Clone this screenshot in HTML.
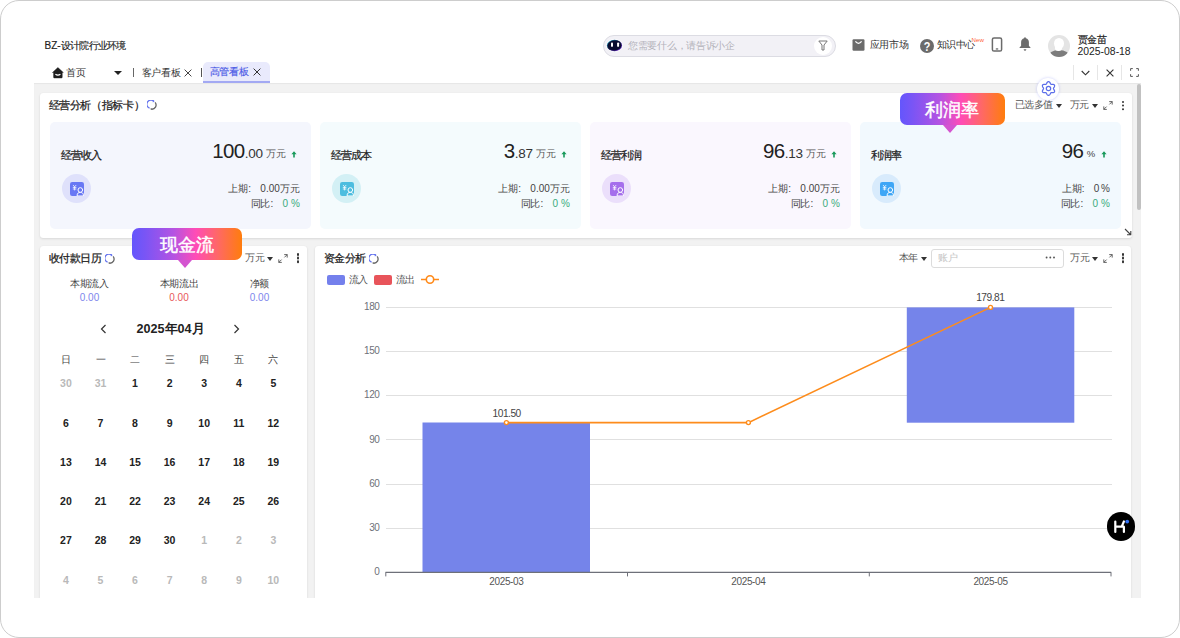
<!DOCTYPE html>
<html><head><meta charset="utf-8">
<style>
*{box-sizing:border-box;margin:0;padding:0}
html,body{width:1180px;height:638px;overflow:hidden;background:#fff}
body{position:relative;font-family:"Liberation Sans",sans-serif;color:#333}
.a{position:absolute;white-space:nowrap}
.t{line-height:1}
.frame{position:absolute;left:0;top:0;width:1180px;height:638px;border:1.6px solid #cdcdcd;border-radius:19px}
.grey{position:absolute;left:34px;top:83px;width:1107px;height:515px;background:#f2f2f2;box-shadow:inset 0 1px 1px rgba(0,0,0,.05)}
.card{position:absolute;background:#fff;border-radius:3px;box-shadow:0 1px 2.5px rgba(0,0,0,.1),0 0 1px rgba(0,0,0,.06)}
.kpi{position:absolute;top:122px;width:261px;height:107px;border-radius:5px}
.kic{position:absolute;left:12px;top:52px;width:29px;height:29px;border-radius:50%}
.kic svg{position:absolute;left:7.5px;top:8px}
.bubble{position:absolute;height:32.4px;border-radius:7px;background:linear-gradient(90deg,#6456fc 0%,#7a55f5 12%,#b553e2 38%,#ff4cb6 58%,#ff6866 78%,#ff7d0c 100%);color:#fff;text-align:center}
.bubble span{position:absolute;left:0;right:0;font-size:18px;line-height:1;letter-spacing:0.3px;-webkit-text-stroke:0.45px #fff}
.bubble:after{content:"";position:absolute;left:50%;bottom:-8px;margin-left:-9px;border-left:7px solid transparent;border-right:7px solid transparent;border-top:8.5px solid #d454d0}
.ctl{position:absolute;font-size:9.8px;color:#555;line-height:1;letter-spacing:-0.5px}
.caret{display:inline-block;width:0;height:0;border-left:3.5px solid transparent;border-right:3.5px solid transparent;border-top:4px solid #333;vertical-align:0.5px;margin-left:3px}
.cal{position:absolute;font-size:10.5px;font-weight:bold;color:#222;width:34px;text-align:center}
.cal.g{color:#b9b9b9}
.wd{position:absolute;font-size:9.5px;color:#444;width:34px;text-align:center}
.yl{position:absolute;font-size:10px;color:#6e7079;text-align:right;width:30px;letter-spacing:-0.4px}
.grid{position:absolute;left:385.5px;width:726px;height:1px;background:#e0e0e0}
.xl{position:absolute;font-size:10px;color:#555;width:60px;text-align:center;letter-spacing:-0.35px}
.val{position:absolute;font-size:10.2px;color:#444;width:60px;text-align:center;letter-spacing:-0.5px}
.kn{position:absolute;font-size:11px;letter-spacing:-0.85px;color:#222;-webkit-text-stroke:0.25px #222;line-height:1}
.kv{position:absolute;color:#222;line-height:1;text-align:right}
.kv .b{font-size:20.5px;letter-spacing:-0.6px}
.kv .s{font-size:13.5px;color:#333;letter-spacing:-0.2px}
.kv .u{font-size:10px;color:#555;margin-left:3.4px;letter-spacing:-0.5px;vertical-align:1px}
.up{position:absolute}
.kp{position:absolute;font-size:10px;letter-spacing:-0.3px;color:#444;line-height:1;text-align:right}
.kp em{font-style:normal;color:#3aab7d}
.kp .c{margin-left:0.5px}
.kp .v{font-size:10px;margin-left:9.5px;letter-spacing:0}
.ref{position:absolute}
.dots{position:absolute;width:2.3px;height:2.3px;background:#333;border-radius:50%;box-shadow:0 3.6px 0 #333,0 7.2px 0 #333}
</style></head><body>
<div class="frame"></div>

<!-- header -->
<div id="title" class="a t" style="left:44.5px;top:40.5px;font-size:10px;color:#222;-webkit-text-stroke:0.15px #222">BZ-<span style="letter-spacing:-0.7px">设计院行业环境</span></div>

<div class="a" style="left:603px;top:35px;width:233px;height:21.5px;border:1px solid #dcdce3;border-radius:11px;background:#f2f1f6"></div>
<svg class="a" style="left:606px;top:39px" width="17" height="13" viewBox="0 0 17 13"><defs><linearGradient id="rg" x1="0" y1="0" x2="1" y2="1"><stop offset="0" stop-color="#33d0e8"/><stop offset=".45" stop-color="#0b1440"/><stop offset="1" stop-color="#8a3af0"/></linearGradient></defs><ellipse cx="8.5" cy="6.5" rx="8.5" ry="6.5" fill="#fbfbfe"/><ellipse cx="8.5" cy="6.5" rx="7.6" ry="5.7" fill="url(#rg)"/><ellipse cx="8.5" cy="6.5" rx="6.8" ry="4.9" fill="#080c2e"/><rect x="5" y="3.4" width="2" height="4.4" rx=".9" fill="#fff"/><rect x="11.1" y="3.4" width="2" height="4.4" rx=".9" fill="#fff"/></svg>
<div id="sph" class="a t" style="left:628px;top:40.5px;font-size:10px;letter-spacing:-0.3px;color:#b2b2ba">您需要什么，请告诉小企</div>
<div class="a" style="left:814px;top:36.5px;width:18px;height:18px;border-radius:50%;background:#fff"></div>
<svg class="a" style="left:818px;top:39.5px" width="10" height="11" viewBox="0 0 10 11"><path d="M.8 1h8.4L6 5v5H4V5z" fill="none" stroke="#777" stroke-width="1" stroke-linejoin="round"/></svg>

<!-- app market -->
<svg class="a" style="left:851.5px;top:39px" width="13" height="12" viewBox="0 0 13 12"><rect x=".5" y=".3" width="12" height="11.4" rx="1.2" fill="#6b6b6b"/><path d="M3.4 2.4q3.1 3.8 6.2 0" fill="none" stroke="#fff" stroke-width="1.3"/></svg>
<div id="app" class="a t" style="left:869.5px;top:40px;font-size:10px;letter-spacing:-0.2px;color:#333">应用市场</div>
<div class="a" style="left:920px;top:38.5px;width:14px;height:14px;border-radius:50%;background:#6b6b6b"></div>
<div class="a t" style="left:920px;top:40.6px;width:14px;text-align:center;font-size:12px;font-weight:bold;color:#fff;transform:scaleX(.9)">?</div>
<div id="know" class="a t" style="left:936.5px;top:40px;font-size:10px;letter-spacing:-0.5px;color:#333">知识中心</div>
<div class="a t" style="left:971.6px;top:36.6px;font-size:6.2px;color:#ff6438">New</div>
<svg class="a" style="left:991px;top:37px" width="12" height="15" viewBox="0 0 12 15"><rect x="1.4" y="1" width="9.2" height="13" rx="1.6" fill="none" stroke="#6b6b6b" stroke-width="1.5"/><rect x="4.8" y="11.3" width="2.4" height="1.3" fill="#6b6b6b"/></svg>
<svg class="a" style="left:1019px;top:37px" width="12" height="15" viewBox="0 0 12 15"><path d="M6 .3c.6 0 .9.4.9.9 1.9.4 3 2 3 4v3.6L11.8 11H.2L2.1 8.8V5.2c0-2 1.1-3.6 3-4 0-.5.3-.9.9-.9z" fill="#6b6b6b"/><path d="M4.6 12.2h2.8q-.3 1.5-1.4 1.5T4.6 12.2z" fill="#6b6b6b"/></svg>
<!-- avatar -->
<div class="a" style="left:1047.5px;top:34.5px;width:22px;height:22px;border-radius:50%;background:#e4e4e4;overflow:hidden">
  <div class="a" style="left:6px;top:3.5px;width:10px;height:11px;border-radius:50%;background:#fff"></div>
  <div class="a" style="left:0px;top:15px;width:22px;height:14px;border-radius:50%;background:#7c7c7c"></div>
  <div class="a" style="left:7.5px;top:12.5px;width:7px;height:3.5px;background:#fff;border-radius:0 0 3px 3px"></div>
</div>
<div id="name" class="a t" style="left:1077.5px;top:35px;font-size:10px;letter-spacing:-0.4px;color:#222;-webkit-text-stroke:0.2px #222">贾金苗</div>
<div id="date" class="a t" style="left:1077.5px;top:47px;font-size:10.4px;color:#222">2025-08-18</div>

<!-- tabs -->
<svg class="a" style="left:51.5px;top:67px" width="12" height="12" viewBox="0 0 12 12"><path d="M5.9.6L11.3 5.5H10.2V10.3Q10.2 10.9 9.6 10.9H2.2Q1.6 10.9 1.6 10.3V5.5H.5z" fill="#1e1e1e" stroke="#1e1e1e" stroke-width=".5" stroke-linejoin="round"/><path d="M3.4 7.3q2.5 1.7 5 0" fill="none" stroke="#fff" stroke-width="1.2"/></svg>
<div id="home" class="a t" style="left:66px;top:67.5px;font-size:10px;letter-spacing:-0.5px;color:#333">首页</div>
<div class="a" style="left:113.5px;top:70.5px;width:0;height:0;border-left:4px solid transparent;border-right:4px solid transparent;border-top:4.5px solid #222"></div>
<div class="a" style="left:133px;top:68px;width:1.2px;height:9px;background:#666"></div>
<div id="tab1" class="a t" style="left:141.5px;top:67.5px;font-size:10px;letter-spacing:-0.3px;color:#333">客户看板</div>
<svg class="a" style="left:184px;top:68.5px" width="8" height="8" viewBox="0 0 8 8"><path d="M.6.6l6.8 6.8M7.4.6L.6 7.4" stroke="#444" stroke-width="1"/></svg>
<div class="a" style="left:201px;top:68px;width:1.2px;height:9px;background:#555"></div>
<div class="a" style="left:203px;top:62px;width:66.5px;height:21px;border-radius:5px 5px 0 0;background:#e9eafc;border-bottom:2px solid #a3a9f3"></div>
<div id="tab2" class="a t" style="left:209.5px;top:67px;font-size:10px;letter-spacing:-0.3px;color:#4a59e6;-webkit-text-stroke:0.15px #4a59e6">高管看板</div>
<svg class="a" style="left:252.5px;top:68px" width="8" height="8" viewBox="0 0 8 8"><path d="M.6.6l6.8 6.8M7.4.6L.6 7.4" stroke="#333" stroke-width="1"/></svg>
<!-- right tab ctrls -->
<div class="a" style="left:1073px;top:65px;width:1px;height:15px;background:#e6e6e6"></div>
<div class="a" style="left:1097px;top:65px;width:1px;height:15px;background:#e6e6e6"></div>
<div class="a" style="left:1121px;top:65px;width:1px;height:15px;background:#e6e6e6"></div>
<svg class="a" style="left:1080.5px;top:69.5px" width="9" height="6" viewBox="0 0 9 6"><path d="M.7 1l3.8 3.8L8.3 1" fill="none" stroke="#333" stroke-width="1.1"/></svg>
<svg class="a" style="left:1105.5px;top:68.5px" width="8" height="8" viewBox="0 0 8 8"><path d="M.6.6l6.8 6.8M7.4.6L.6 7.4" stroke="#333" stroke-width="1.1"/></svg>
<svg class="a" style="left:1129.5px;top:68px" width="9" height="9" viewBox="0 0 9 9"><path d="M.6 2.8V.6h2.2M6.2.6h2.2v2.2M8.4 6.2v2.2H6.2M2.8 8.4H.6V6.2" fill="none" stroke="#555" stroke-width="1"/></svg>

<!-- grey dashboard -->
<div class="grey"></div>
<div class="a" style="left:1136.5px;top:84px;width:4.5px;height:126px;border-radius:2.2px;background:#c1c1c1"></div>

<!-- card 1 -->
<div class="card" style="left:40px;top:92.5px;width:1091.5px;height:145.5px"></div>
<div id="ct1" class="a t" style="left:48.5px;top:100px;font-size:11px;letter-spacing:-0.35px;color:#222;-webkit-text-stroke:0.25px #222">经营分析（指标卡）</div>
<svg class="ref" style="left:146.7px;top:100px" width="10" height="10" viewBox="0 0 10 10"><path d="M6.9 1.2A4.2 4.2 0 1 0 2.6 8.2" fill="none" stroke="#6574ee" stroke-width="1.3"/><path d="M5.6 .2L7.6 1.3 5.9 2.6z" fill="#6574ee"/><path d="M8.1 2.4A4.2 4.2 0 0 1 4.3 9.2" fill="none" stroke="#666" stroke-width="1.3"/><path d="M4.6 8.1L3 9.1 4.8 10z" fill="#666"/></svg>

<div id="multi" class="ctl" style="left:1014.7px;top:100px">已选多值<span class="caret"></span></div>
<div id="wy1" class="ctl" style="left:1069.8px;top:100px">万元<span class="caret"></span></div>
<svg class="a" style="left:1102.5px;top:101px" width="10" height="9" viewBox="0 0 10 9"><path d="M6.2.6h3v3M9.2.6L6.4 3.4M3.8 8.4h-3v-3M.8 8.4l2.8-2.8" fill="none" stroke="#555" stroke-width="0.9"/></svg>
<div class="dots" style="left:1121.8px;top:101px"></div>

<!-- KPI cards -->
<div class="kpi" style="left:50px;background:#f4f6fd"></div><div id="kn0" class="kn" style="left:61px;top:150px">经营收入</div><div class="kic" style="left:62px;top:174px;background:#dfe1fb"><svg width="14" height="14" viewBox="0 0 14 14"><rect x="0" y="0" width="14" height="14" rx="2.2" fill="#6877f4"/><path d="M3 3l1.6 1.8L6.2 3M2.8 5.4h3.6M2.8 7h3.6M4.6 4.8v3.6" fill="none" stroke="#fff" stroke-width=".9" opacity=".85"/><circle cx="10.3" cy="8" r="2.3" fill="#6877f4" stroke="#fff" stroke-width="1"/><path d="M7.2 14v-1.2c0-1.5 1.4-2.4 3.1-2.4s3.1.9 3.1 2.4V14z" fill="#6877f4" stroke="#fff" stroke-width="1"/><circle cx="10.3" cy="8" r="1.3" fill="#6877f4"/></svg></div><div id="kv0" class="kv" style="right:894.8px;top:140.6px"><span class="b">100</span><span class="s">.00</span><span class="u">万元</span></div><svg class="up" style="left:290.5px;top:150.5px" width="6" height="7" viewBox="0 0 6 7"><path d="M3 .2L5.6 3.3H3.8V6.6H2.2V3.3H.4z" fill="#17995a"/></svg><div id="kp0" class="kp" style="right:880.2px;top:184.3px">上期<span class="c">:</span><span class="v">0.00万元</span></div><div class="kp" style="right:880.2px;top:198.9px">同比<span class="c">:</span><span class="v"><em>0 %</em></span></div><div class="kpi" style="left:320px;background:#f4fbfd"></div><div id="kn1" class="kn" style="left:331px;top:150px">经营成本</div><div class="kic" style="left:332px;top:174px;background:#d3f0f5"><svg width="14" height="14" viewBox="0 0 14 14"><rect x="0" y="0" width="14" height="14" rx="2.2" fill="#4cbddf"/><path d="M3 3l1.6 1.8L6.2 3M2.8 5.4h3.6M2.8 7h3.6M4.6 4.8v3.6" fill="none" stroke="#fff" stroke-width=".9" opacity=".85"/><circle cx="10.3" cy="8" r="2.3" fill="#4cbddf" stroke="#fff" stroke-width="1"/><path d="M7.2 14v-1.2c0-1.5 1.4-2.4 3.1-2.4s3.1.9 3.1 2.4V14z" fill="#4cbddf" stroke="#fff" stroke-width="1"/><circle cx="10.3" cy="8" r="1.3" fill="#4cbddf"/></svg></div><div id="kv1" class="kv" style="right:624.8px;top:140.6px"><span class="b">3</span><span class="s">.87</span><span class="u">万元</span></div><svg class="up" style="left:560.5px;top:150.5px" width="6" height="7" viewBox="0 0 6 7"><path d="M3 .2L5.6 3.3H3.8V6.6H2.2V3.3H.4z" fill="#17995a"/></svg><div id="kp1" class="kp" style="right:610.2px;top:184.3px">上期<span class="c">:</span><span class="v">0.00万元</span></div><div class="kp" style="right:610.2px;top:198.9px">同比<span class="c">:</span><span class="v"><em>0 %</em></span></div><div class="kpi" style="left:590px;background:#faf7fe"></div><div id="kn2" class="kn" style="left:601px;top:150px">经营利润</div><div class="kic" style="left:602px;top:174px;background:#ebdffb"><svg width="14" height="14" viewBox="0 0 14 14"><rect x="0" y="0" width="14" height="14" rx="2.2" fill="#a56eec"/><path d="M3 3l1.6 1.8L6.2 3M2.8 5.4h3.6M2.8 7h3.6M4.6 4.8v3.6" fill="none" stroke="#fff" stroke-width=".9" opacity=".85"/><circle cx="10.3" cy="8" r="2.3" fill="#a56eec" stroke="#fff" stroke-width="1"/><path d="M7.2 14v-1.2c0-1.5 1.4-2.4 3.1-2.4s3.1.9 3.1 2.4V14z" fill="#a56eec" stroke="#fff" stroke-width="1"/><circle cx="10.3" cy="8" r="1.3" fill="#a56eec"/></svg></div><div id="kv2" class="kv" style="right:354.8px;top:140.6px"><span class="b">96</span><span class="s">.13</span><span class="u">万元</span></div><svg class="up" style="left:830.5px;top:150.5px" width="6" height="7" viewBox="0 0 6 7"><path d="M3 .2L5.6 3.3H3.8V6.6H2.2V3.3H.4z" fill="#17995a"/></svg><div id="kp2" class="kp" style="right:340.2px;top:184.3px">上期<span class="c">:</span><span class="v">0.00万元</span></div><div class="kp" style="right:340.2px;top:198.9px">同比<span class="c">:</span><span class="v"><em>0 %</em></span></div><div class="kpi" style="left:860px;background:#f2f9fe"></div><div id="kn3" class="kn" style="left:871px;top:150px">利润率</div><div class="kic" style="left:872px;top:174px;background:#d8ebfc"><svg width="14" height="14" viewBox="0 0 14 14"><rect x="0" y="0" width="14" height="14" rx="2.2" fill="#3ea6f6"/><path d="M3 3l1.6 1.8L6.2 3M2.8 5.4h3.6M2.8 7h3.6M4.6 4.8v3.6" fill="none" stroke="#fff" stroke-width=".9" opacity=".85"/><circle cx="10.3" cy="8" r="2.3" fill="#3ea6f6" stroke="#fff" stroke-width="1"/><path d="M7.2 14v-1.2c0-1.5 1.4-2.4 3.1-2.4s3.1.9 3.1 2.4V14z" fill="#3ea6f6" stroke="#fff" stroke-width="1"/><circle cx="10.3" cy="8" r="1.3" fill="#3ea6f6"/></svg></div><div id="kv3" class="kv" style="right:84.8px;top:140.6px"><span class="b">96</span><span class="s"></span><span class="u"><span style="font-size:9.5px;color:#444;letter-spacing:0">%</span></span></div><svg class="up" style="left:1100.5px;top:150.5px" width="6" height="7" viewBox="0 0 6 7"><path d="M3 .2L5.6 3.3H3.8V6.6H2.2V3.3H.4z" fill="#17995a"/></svg><div id="kp3" class="kp" style="right:70.2px;top:184.3px">上期<span class="c">:</span><span class="v">0<span style="margin-left:1.5px">%</span></span></div><div class="kp" style="right:70.2px;top:198.9px">同比<span class="c">:</span><span class="v"><em>0 %</em></span></div>
<svg class="a" style="left:1123.5px;top:227.5px" width="8" height="8" viewBox="0 0 8 8"><path d="M1 1l5.5 5.5M6.8 3v3.8H3" fill="none" stroke="#444" stroke-width="1.1"/></svg>

<!-- gear -->
<div class="a" style="left:1037px;top:77.5px;width:22px;height:22px;border-radius:50%;background:#fff;box-shadow:0 0 3px rgba(100,110,240,.35)"></div>
<svg class="a" style="left:1040.5px;top:81px" width="15" height="15" viewBox="0 0 15 15"><path d="M12.45 7.50L12.47 7.67L12.52 7.85L12.60 8.04L12.71 8.23L12.84 8.44L12.98 8.67L13.13 8.90L13.27 9.15L13.39 9.41L13.49 9.68L13.56 9.95L13.59 10.21L13.58 10.47L13.53 10.71L13.43 10.93L13.29 11.12L13.11 11.28L12.89 11.42L12.65 11.52L12.38 11.60L12.10 11.64L11.82 11.67L11.53 11.67L11.25 11.67L10.99 11.66L10.74 11.65L10.52 11.65L10.31 11.67L10.13 11.72L9.98 11.79L9.83 11.89L9.71 12.02L9.59 12.19L9.47 12.38L9.36 12.60L9.23 12.83L9.10 13.08L8.95 13.32L8.79 13.56L8.61 13.78L8.41 13.97L8.20 14.13L7.97 14.25L7.74 14.33L7.50 14.35L7.26 14.33L7.03 14.25L6.80 14.13L6.59 13.97L6.39 13.78L6.21 13.56L6.05 13.32L5.90 13.08L5.77 12.83L5.64 12.60L5.53 12.38L5.41 12.19L5.29 12.02L5.17 11.89L5.03 11.79L4.87 11.72L4.69 11.67L4.48 11.65L4.26 11.65L4.01 11.66L3.75 11.67L3.47 11.67L3.18 11.67L2.90 11.64L2.62 11.60L2.35 11.52L2.11 11.42L1.89 11.28L1.71 11.12L1.57 10.93L1.47 10.71L1.42 10.47L1.41 10.21L1.44 9.95L1.51 9.68L1.61 9.41L1.73 9.15L1.87 8.90L2.02 8.67L2.16 8.44L2.29 8.23L2.40 8.04L2.48 7.85L2.53 7.67L2.55 7.50L2.53 7.33L2.48 7.15L2.40 6.96L2.29 6.77L2.16 6.56L2.02 6.33L1.87 6.10L1.73 5.85L1.61 5.59L1.51 5.32L1.44 5.05L1.41 4.79L1.42 4.53L1.47 4.29L1.57 4.07L1.71 3.88L1.89 3.72L2.11 3.58L2.35 3.48L2.62 3.40L2.90 3.36L3.18 3.33L3.47 3.33L3.75 3.33L4.01 3.34L4.26 3.35L4.48 3.35L4.69 3.33L4.87 3.28L5.02 3.21L5.17 3.11L5.29 2.98L5.41 2.81L5.53 2.62L5.64 2.40L5.77 2.17L5.90 1.92L6.05 1.68L6.21 1.44L6.39 1.22L6.59 1.03L6.80 0.87L7.03 0.75L7.26 0.67L7.50 0.65L7.74 0.67L7.97 0.75L8.20 0.87L8.41 1.03L8.61 1.22L8.79 1.44L8.95 1.68L9.10 1.92L9.23 2.17L9.36 2.40L9.47 2.62L9.59 2.81L9.71 2.98L9.83 3.11L9.98 3.21L10.13 3.28L10.31 3.33L10.52 3.35L10.74 3.35L10.99 3.34L11.25 3.33L11.53 3.33L11.82 3.33L12.10 3.36L12.38 3.40L12.65 3.48L12.89 3.58L13.11 3.72L13.29 3.88L13.43 4.07L13.53 4.29L13.58 4.53L13.59 4.79L13.56 5.05L13.49 5.32L13.39 5.59L13.27 5.85L13.13 6.10L12.98 6.33L12.84 6.56L12.71 6.77L12.60 6.96L12.52 7.15L12.47 7.33z" fill="none" stroke="#5b6de9" stroke-width="1.25" stroke-linejoin="round"/><circle cx="7.5" cy="7.5" r="2.2" fill="none" stroke="#5b6de9" stroke-width="1.2"/></svg>

<!-- bubble 利润率 -->
<div class="bubble" style="left:900px;top:93px;width:104.5px"><span id="bb1" style="top:8px">利润率</span></div>

<!-- calendar card -->
<div class="card" style="left:40px;top:245.5px;width:267px;height:352.5px;border-radius:3px 3px 0 0;clip-path:inset(-4px -4px 0 -4px)"></div>
<div id="ct2" class="a t" style="left:48.5px;top:253px;font-size:11px;letter-spacing:-0.35px;color:#222;-webkit-text-stroke:0.25px #222">收付款日历</div>
<svg class="ref" style="left:104.6px;top:253.8px" width="10" height="10" viewBox="0 0 10 10"><path d="M6.9 1.2A4.2 4.2 0 1 0 2.6 8.2" fill="none" stroke="#6574ee" stroke-width="1.3"/><path d="M5.6 .2L7.6 1.3 5.9 2.6z" fill="#6574ee"/><path d="M8.1 2.4A4.2 4.2 0 0 1 4.3 9.2" fill="none" stroke="#666" stroke-width="1.3"/><path d="M4.6 8.1L3 9.1 4.8 10z" fill="#666"/></svg>
<div id="wy2" class="ctl" style="left:245px;top:253px">万元<span class="caret"></span></div>
<svg class="a" style="left:278px;top:254px" width="10" height="9" viewBox="0 0 10 9"><path d="M6.2.6h3v3M9.2.6L6.4 3.4M3.8 8.4h-3v-3M.8 8.4l2.8-2.8" fill="none" stroke="#555" stroke-width="0.9"/></svg>
<div class="dots" style="left:297.2px;top:253.4px"></div>

<div id="in1" class="a t" style="left:69.5px;top:279px;font-size:10px;letter-spacing:-0.3px;color:#444;width:40px;text-align:center">本期流入</div>
<div id="in2" class="a t" style="left:69.5px;top:292.5px;font-size:10px;color:#7d86ec;width:40px;text-align:center">0.00</div>
<div class="a t" style="left:159px;top:279px;font-size:10px;letter-spacing:-0.3px;color:#444;width:40px;text-align:center">本期流出</div>
<div class="a t" style="left:159px;top:292.5px;font-size:10px;color:#e8585b;width:40px;text-align:center">0.00</div>
<div class="a t" style="left:239.5px;top:279px;font-size:10px;letter-spacing:-0.3px;color:#444;width:40px;text-align:center">净额</div>
<div class="a t" style="left:239.5px;top:292.5px;font-size:10px;color:#7d86ec;width:40px;text-align:center">0.00</div>

<svg class="a" style="left:100px;top:323.5px" width="7" height="10" viewBox="0 0 7 10"><path d="M5.5 1L1.5 5l4 4" fill="none" stroke="#333" stroke-width="1.2"/></svg>
<div id="month" class="a t" style="left:136.5px;top:322.5px;font-size:12.6px;font-weight:bold;color:#222">2025年04月</div>
<svg class="a" style="left:233px;top:323.5px" width="7" height="10" viewBox="0 0 7 10"><path d="M1.5 1l4 4-4 4" fill="none" stroke="#333" stroke-width="1.2"/></svg>

<div class="wd t" style="left:48.9px;top:355px">日</div><div class="wd t" style="left:83.5px;top:355px">一</div><div class="wd t" style="left:118.0px;top:355px">二</div><div class="wd t" style="left:152.6px;top:355px">三</div><div class="wd t" style="left:187.2px;top:355px">四</div><div class="wd t" style="left:221.8px;top:355px">五</div><div class="wd t" style="left:256.3px;top:355px">六</div><div class="cal t g" style="left:48.9px;top:378.2px">30</div><div class="cal t g" style="left:83.5px;top:378.2px">31</div><div class="cal t" style="left:118.0px;top:378.2px">1</div><div class="cal t" style="left:152.6px;top:378.2px">2</div><div class="cal t" style="left:187.2px;top:378.2px">3</div><div class="cal t" style="left:221.8px;top:378.2px">4</div><div class="cal t" style="left:256.3px;top:378.2px">5</div><div class="cal t" style="left:48.9px;top:417.6px">6</div><div class="cal t" style="left:83.5px;top:417.6px">7</div><div class="cal t" style="left:118.0px;top:417.6px">8</div><div class="cal t" style="left:152.6px;top:417.6px">9</div><div class="cal t" style="left:187.2px;top:417.6px">10</div><div class="cal t" style="left:221.8px;top:417.6px">11</div><div class="cal t" style="left:256.3px;top:417.6px">12</div><div class="cal t" style="left:48.9px;top:457.0px">13</div><div class="cal t" style="left:83.5px;top:457.0px">14</div><div class="cal t" style="left:118.0px;top:457.0px">15</div><div class="cal t" style="left:152.6px;top:457.0px">16</div><div class="cal t" style="left:187.2px;top:457.0px">17</div><div class="cal t" style="left:221.8px;top:457.0px">18</div><div class="cal t" style="left:256.3px;top:457.0px">19</div><div class="cal t" style="left:48.9px;top:496.3px">20</div><div class="cal t" style="left:83.5px;top:496.3px">21</div><div class="cal t" style="left:118.0px;top:496.3px">22</div><div class="cal t" style="left:152.6px;top:496.3px">23</div><div class="cal t" style="left:187.2px;top:496.3px">24</div><div class="cal t" style="left:221.8px;top:496.3px">25</div><div class="cal t" style="left:256.3px;top:496.3px">26</div><div class="cal t" style="left:48.9px;top:535.4px">27</div><div class="cal t" style="left:83.5px;top:535.4px">28</div><div class="cal t" style="left:118.0px;top:535.4px">29</div><div class="cal t" style="left:152.6px;top:535.4px">30</div><div class="cal t g" style="left:187.2px;top:535.4px">1</div><div class="cal t g" style="left:221.8px;top:535.4px">2</div><div class="cal t g" style="left:256.3px;top:535.4px">3</div><div class="cal t g" style="left:48.9px;top:574.6px">4</div><div class="cal t g" style="left:83.5px;top:574.6px">5</div><div class="cal t g" style="left:118.0px;top:574.6px">6</div><div class="cal t g" style="left:152.6px;top:574.6px">7</div><div class="cal t g" style="left:187.2px;top:574.6px">8</div><div class="cal t g" style="left:221.8px;top:574.6px">9</div><div class="cal t g" style="left:256.3px;top:574.6px">10</div>

<!-- bubble 现金流 -->
<div class="bubble" style="left:132px;top:228px;width:110px"><span id="bb2" style="top:8px">现金流</span></div>

<!-- chart card -->
<div class="card" style="left:315px;top:245.5px;width:816px;height:352.5px;border-radius:3px 3px 0 0;clip-path:inset(-4px -4px 0 -4px)"></div>
<div id="ct3" class="a t" style="left:323.5px;top:253px;font-size:11px;letter-spacing:-0.35px;color:#222;-webkit-text-stroke:0.25px #222">资金分析</div>
<svg class="ref" style="left:368.7px;top:253.6px" width="10" height="10" viewBox="0 0 10 10"><path d="M6.9 1.2A4.2 4.2 0 1 0 2.6 8.2" fill="none" stroke="#6574ee" stroke-width="1.3"/><path d="M5.6 .2L7.6 1.3 5.9 2.6z" fill="#6574ee"/><path d="M8.1 2.4A4.2 4.2 0 0 1 4.3 9.2" fill="none" stroke="#666" stroke-width="1.3"/><path d="M4.6 8.1L3 9.1 4.8 10z" fill="#666"/></svg>
<div id="year" class="ctl" style="left:898.5px;top:253px">本年<span class="caret"></span></div>
<div class="a" style="left:931px;top:248.5px;width:133px;height:19px;border:1px solid #dcdcdc;border-radius:3px;background:#fff"></div>
<div class="a t" style="left:937.5px;top:253px;font-size:9.8px;color:#c4c4c4">账户</div>
<svg class="a" style="left:1045px;top:256px" width="11" height="3" viewBox="0 0 11 3"><circle cx="1.6" cy="1.5" r=".95" fill="#555"/><circle cx="5.3" cy="1.5" r=".95" fill="#555"/><circle cx="9" cy="1.5" r=".95" fill="#555"/></svg>
<div id="wy3" class="ctl" style="left:1070px;top:253px">万元<span class="caret"></span></div>
<svg class="a" style="left:1102.5px;top:254px" width="10" height="9" viewBox="0 0 10 9"><path d="M6.2.6h3v3M9.2.6L6.4 3.4M3.8 8.4h-3v-3M.8 8.4l2.8-2.8" fill="none" stroke="#555" stroke-width="0.9"/></svg>
<div class="dots" style="left:1122px;top:253.4px"></div>

<!-- legend -->
<div class="a" style="left:327px;top:274.5px;width:18px;height:10px;border-radius:2px;background:#7480ec"></div>
<div id="lg1" class="a t" style="left:349px;top:274.7px;font-size:10px;letter-spacing:-0.6px;color:#555">流入</div>
<div class="a" style="left:373.5px;top:274.5px;width:18px;height:10px;border-radius:2px;background:#e8545a"></div>
<div class="a t" style="left:396px;top:274.7px;font-size:10px;letter-spacing:-0.6px;color:#555">流出</div>
<svg class="a" style="left:420px;top:274px" width="20" height="11" viewBox="0 0 20 11"><path d="M1 5.5h18" stroke="#ff8a1a" stroke-width="1.5"/><circle cx="10" cy="5.5" r="3.7" fill="#fff" stroke="#ff8a1a" stroke-width="1.6"/></svg>

<div class="grid" style="top:306.8px"></div><div class="yl t" style="left:349.5px;top:302.0px">180</div><div class="grid" style="top:351.0px"></div><div class="yl t" style="left:349.5px;top:346.2px">150</div><div class="grid" style="top:395.2px"></div><div class="yl t" style="left:349.5px;top:390.4px">120</div><div class="grid" style="top:439.4px"></div><div class="yl t" style="left:349.5px;top:434.6px">90</div><div class="grid" style="top:483.5px"></div><div class="yl t" style="left:349.5px;top:478.7px">60</div><div class="grid" style="top:527.7px"></div><div class="yl t" style="left:349.5px;top:522.9px">30</div><div class="yl t" style="left:349.5px;top:567.1px">0</div><svg class="a" style="left:0;top:0" width="1180" height="638" viewBox="0 0 1180 638">
<rect x="422.5" y="422.5" width="167.5" height="149.9" fill="#7584ea"/>
<rect x="906.8" y="307.4" width="167.5" height="115.3" fill="#7584ea"/>
<path d="M385.5 572.4H1111.2" stroke="#6e7079" stroke-width="1.3"/>
<path d="M385.8 572.4v4M627.5 572.4v4M869.3 572.4v4M1111 572.4v4" stroke="#6e7079" stroke-width="1"/>
<polyline points="506.4,422.6 748.4,422.6 990.5,307.4" fill="none" stroke="#fd8c1c" stroke-width="1.6"/>
<circle cx="506.4" cy="422.6" r="2" fill="#fff" stroke="#fd8c1c" stroke-width="1.4"/>
<circle cx="748.4" cy="422.6" r="2" fill="#fff" stroke="#fd8c1c" stroke-width="1.4"/>
<circle cx="990.5" cy="307.4" r="2" fill="#fff" stroke="#fd8c1c" stroke-width="1.4"/>
</svg><div id="v1" class="val t" style="left:476.7px;top:408.5px">101.50</div><div id="v2" class="val t" style="left:960.3px;top:293.3px">179.81</div><div class="xl t" style="left:476.4px;top:576.5px">2025-03</div><div class="xl t" style="left:718.4px;top:576.5px">2025-04</div><div class="xl t" style="left:960.5px;top:576.5px">2025-05</div>

<!-- K icon -->
<div class="a" style="left:1106.5px;top:512.3px;width:28.5px;height:28.5px;border-radius:50%;background:#000"></div>
<svg class="a" style="left:1106.5px;top:512.3px" width="28" height="28" viewBox="0 0 28 28"><path d="M8.3 9.6v10.3M8.3 14.6h8.4M16.9 14.8v5.1M14.8 14.4l2.1-4.9" fill="none" stroke="#fff" stroke-width="2.2" stroke-linecap="round" stroke-linejoin="round"/><circle cx="20.2" cy="9.6" r="1.9" fill="#2f6ff5"/></svg>

</body></html>
